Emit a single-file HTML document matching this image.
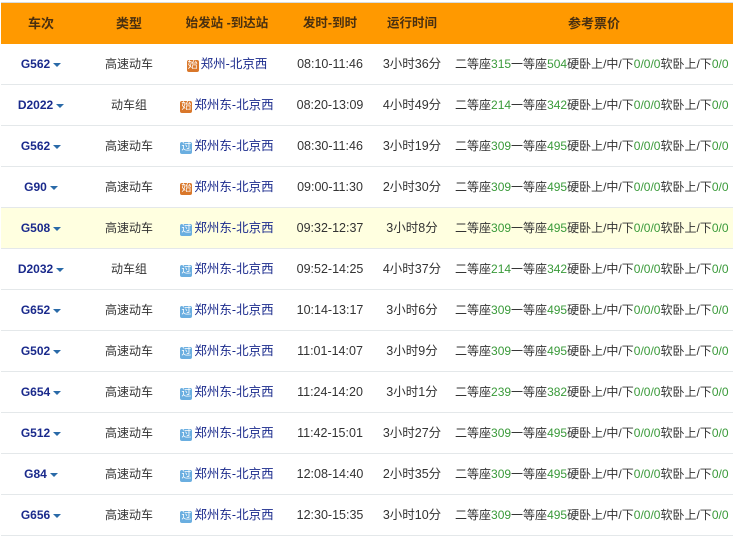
<!DOCTYPE html>
<html><head><meta charset="utf-8"><style>
body{margin:0;background:#fff;width:734px;height:538px;overflow:hidden;font-family:"Liberation Sans","Noto Sans CJK SC",sans-serif;font-size:12px;color:#333}
.wrap{position:absolute;left:1px;top:2px;width:732px;border-top:1px solid #d6dde0}
.hd{height:41px;background:#ff9900;position:relative;font-weight:bold;color:#4a3010;font-size:13px}
.row{height:40px;border-bottom:1px solid #e4e8ea;position:relative}
.row.hl{background:#ffffe0}
.c{position:absolute;top:0;line-height:40px;white-space:nowrap;text-align:center}
.hd .c{line-height:41px}
.c1{left:0;width:80px}.c2{left:85px;width:86px}.c3{left:170px;width:112px;font-size:12.5px}.c4{left:285px;width:88px;font-size:12.5px}.c5{left:373px;width:76px;font-size:12.5px}.c6{left:454px;text-align:left;font-size:12px;letter-spacing:0}
.hd .c6{left:454px;width:278px;text-align:center;font-size:13px}
.tn{color:#1a2a8c;font-weight:bold}
.ar{display:inline-block;width:0;height:0;border-left:4px solid transparent;border-right:4px solid transparent;border-top:4px solid #2a6aa8;margin-left:3px;vertical-align:middle}
.st{color:#1a2a8c}
.b{display:inline-block;width:12px;height:12px;line-height:12px;font-size:10px;color:#fff;text-align:center;border-radius:2px;vertical-align:0px;margin-right:2px}
.s{background:#d9772a}.g{background:#6aaee0}
.p{color:#3a9a3a}
</style></head><body><div class="wrap">
<div class="hd"><div class="c c1">车次</div><div class="c c2">类型</div><div class="c c3">始发站 -到达站</div><div class="c c4">发时-到时</div><div class="c c5">运行时间</div><div class="c c6">参考票价</div></div>
<div class="row"><div class="c c1"><span class="tn">G562</span><span class="ar"></span></div><div class="c c2">高速动车</div><div class="c c3"><span class="b s">始</span><span class="st">郑州-北京西</span></div><div class="c c4">08:10-11:46</div><div class="c c5">3小时36分</div><div class="c c6">二等座<span class="p">315</span>一等座<span class="p">504</span>硬卧上/中/下<span class="p">0/0/0</span>软卧上/下<span class="p">0/0</span></div></div>
<div class="row"><div class="c c1"><span class="tn">D2022</span><span class="ar"></span></div><div class="c c2">动车组</div><div class="c c3"><span class="b s">始</span><span class="st">郑州东-北京西</span></div><div class="c c4">08:20-13:09</div><div class="c c5">4小时49分</div><div class="c c6">二等座<span class="p">214</span>一等座<span class="p">342</span>硬卧上/中/下<span class="p">0/0/0</span>软卧上/下<span class="p">0/0</span></div></div>
<div class="row"><div class="c c1"><span class="tn">G562</span><span class="ar"></span></div><div class="c c2">高速动车</div><div class="c c3"><span class="b g">过</span><span class="st">郑州东-北京西</span></div><div class="c c4">08:30-11:46</div><div class="c c5">3小时19分</div><div class="c c6">二等座<span class="p">309</span>一等座<span class="p">495</span>硬卧上/中/下<span class="p">0/0/0</span>软卧上/下<span class="p">0/0</span></div></div>
<div class="row"><div class="c c1"><span class="tn">G90</span><span class="ar"></span></div><div class="c c2">高速动车</div><div class="c c3"><span class="b s">始</span><span class="st">郑州东-北京西</span></div><div class="c c4">09:00-11:30</div><div class="c c5">2小时30分</div><div class="c c6">二等座<span class="p">309</span>一等座<span class="p">495</span>硬卧上/中/下<span class="p">0/0/0</span>软卧上/下<span class="p">0/0</span></div></div>
<div class="row hl"><div class="c c1"><span class="tn">G508</span><span class="ar"></span></div><div class="c c2">高速动车</div><div class="c c3"><span class="b g">过</span><span class="st">郑州东-北京西</span></div><div class="c c4">09:32-12:37</div><div class="c c5">3小时8分</div><div class="c c6">二等座<span class="p">309</span>一等座<span class="p">495</span>硬卧上/中/下<span class="p">0/0/0</span>软卧上/下<span class="p">0/0</span></div></div>
<div class="row"><div class="c c1"><span class="tn">D2032</span><span class="ar"></span></div><div class="c c2">动车组</div><div class="c c3"><span class="b g">过</span><span class="st">郑州东-北京西</span></div><div class="c c4">09:52-14:25</div><div class="c c5">4小时37分</div><div class="c c6">二等座<span class="p">214</span>一等座<span class="p">342</span>硬卧上/中/下<span class="p">0/0/0</span>软卧上/下<span class="p">0/0</span></div></div>
<div class="row"><div class="c c1"><span class="tn">G652</span><span class="ar"></span></div><div class="c c2">高速动车</div><div class="c c3"><span class="b g">过</span><span class="st">郑州东-北京西</span></div><div class="c c4">10:14-13:17</div><div class="c c5">3小时6分</div><div class="c c6">二等座<span class="p">309</span>一等座<span class="p">495</span>硬卧上/中/下<span class="p">0/0/0</span>软卧上/下<span class="p">0/0</span></div></div>
<div class="row"><div class="c c1"><span class="tn">G502</span><span class="ar"></span></div><div class="c c2">高速动车</div><div class="c c3"><span class="b g">过</span><span class="st">郑州东-北京西</span></div><div class="c c4">11:01-14:07</div><div class="c c5">3小时9分</div><div class="c c6">二等座<span class="p">309</span>一等座<span class="p">495</span>硬卧上/中/下<span class="p">0/0/0</span>软卧上/下<span class="p">0/0</span></div></div>
<div class="row"><div class="c c1"><span class="tn">G654</span><span class="ar"></span></div><div class="c c2">高速动车</div><div class="c c3"><span class="b g">过</span><span class="st">郑州东-北京西</span></div><div class="c c4">11:24-14:20</div><div class="c c5">3小时1分</div><div class="c c6">二等座<span class="p">239</span>一等座<span class="p">382</span>硬卧上/中/下<span class="p">0/0/0</span>软卧上/下<span class="p">0/0</span></div></div>
<div class="row"><div class="c c1"><span class="tn">G512</span><span class="ar"></span></div><div class="c c2">高速动车</div><div class="c c3"><span class="b g">过</span><span class="st">郑州东-北京西</span></div><div class="c c4">11:42-15:01</div><div class="c c5">3小时27分</div><div class="c c6">二等座<span class="p">309</span>一等座<span class="p">495</span>硬卧上/中/下<span class="p">0/0/0</span>软卧上/下<span class="p">0/0</span></div></div>
<div class="row"><div class="c c1"><span class="tn">G84</span><span class="ar"></span></div><div class="c c2">高速动车</div><div class="c c3"><span class="b g">过</span><span class="st">郑州东-北京西</span></div><div class="c c4">12:08-14:40</div><div class="c c5">2小时35分</div><div class="c c6">二等座<span class="p">309</span>一等座<span class="p">495</span>硬卧上/中/下<span class="p">0/0/0</span>软卧上/下<span class="p">0/0</span></div></div>
<div class="row"><div class="c c1"><span class="tn">G656</span><span class="ar"></span></div><div class="c c2">高速动车</div><div class="c c3"><span class="b g">过</span><span class="st">郑州东-北京西</span></div><div class="c c4">12:30-15:35</div><div class="c c5">3小时10分</div><div class="c c6">二等座<span class="p">309</span>一等座<span class="p">495</span>硬卧上/中/下<span class="p">0/0/0</span>软卧上/下<span class="p">0/0</span></div></div>
</div></body></html>
